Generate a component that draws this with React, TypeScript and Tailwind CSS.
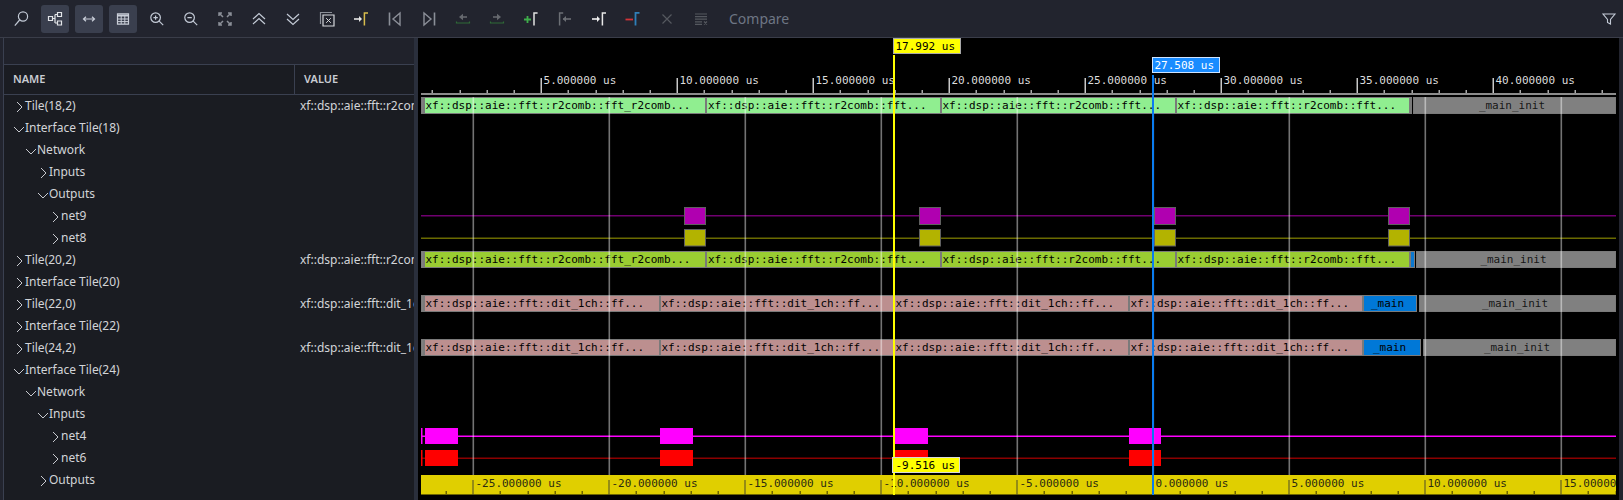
import type { ReactNode } from "react";

type TreeRow = { name: string; level: number; open?: boolean; value?: string };

const R2 = "xf::dsp::aie::fft::r2comb";
const DIT = "xf::dsp::aie::fft::dit_1ch";

const rows: TreeRow[] = [
  { name: "Tile(18,2)", level: 0, value: R2 },
  { name: "Interface Tile(18)", level: 0, open: true },
  { name: "Network", level: 1, open: true },
  { name: "Inputs", level: 2 },
  { name: "Outputs", level: 2, open: true },
  { name: "net9", level: 3 },
  { name: "net8", level: 3 },
  { name: "Tile(20,2)", level: 0, value: R2 },
  { name: "Interface Tile(20)", level: 0 },
  { name: "Tile(22,0)", level: 0, value: DIT },
  { name: "Interface Tile(22)", level: 0 },
  { name: "Tile(24,2)", level: 0, value: DIT },
  { name: "Interface Tile(24)", level: 0, open: true },
  { name: "Network", level: 1, open: true },
  { name: "Inputs", level: 2, open: true },
  { name: "net4", level: 3 },
  { name: "net6", level: 3 },
  { name: "Outputs", level: 2 },
];

function Ico({ children }: { children: ReactNode }) {
  return (
    <svg width="20" height="20" viewBox="0 0 20 20" fill="none" strokeWidth="1.2">
      {children}
    </svg>
  );
}

function Btn({ on, children }: { on?: boolean; children: ReactNode }) {
  return (
    <div className={`flex h-7 w-7 shrink-0 items-center justify-center rounded-[3px] ${on ? "bg-[#3a3f4e]" : ""}`}>
      {children}
    </div>
  );
}

const FG = "#c3cad6";
const GREY = "#8b8f98";
const DIM = "#55585f";

const icons: { on?: boolean; el: ReactNode }[] = [
  { el: <Ico><circle cx="12" cy="7.5" r="4.6" stroke={FG} /><path d="M8.6 11 3.8 16.6" stroke={FG} /></Ico> },
  { on: true, el: <Ico><path d="M3.5 7.5h4v4h-4zM12.5 3.5h4v4h-4zM12.5 12h4v4h-4zM7.5 9.5h2.5M10 5.5v8.5M10 5.5h2.5M10 14h2.5" stroke="#e2e4e8" /></Ico> },
  { on: true, el: <Ico><path d="M4.5 10h11M7 7.8 4.5 10 7 12.2M13 7.8l2.5 2.2-2.5 2.2" stroke="#c9ced8" /></Ico> },
  { on: true, el: <Ico><path d="M4.5 4.8h11v10.4h-11z" stroke="#c9ced8" /><path d="M4.5 5.5h11v2h-11z" fill="#c9ced8" /><path d="M4.5 10h11M4.5 12.6h11M8.2 7v8M11.8 7v8" stroke="#c9ced8" strokeWidth="1" /></Ico> },
  { el: <Ico><circle cx="8.6" cy="8.6" r="4.8" stroke={FG} /><path d="m12.2 12.2 4 4M6.4 8.6h4.4M8.6 6.4v4.4" stroke={FG} /></Ico> },
  { el: <Ico><circle cx="8.6" cy="8.6" r="4.8" stroke={FG} /><path d="m12.2 12.2 4 4M6.4 8.6h4.4" stroke={FG} /></Ico> },
  { el: <Ico><path d="M4 7V4h3M13 4h3v3M4 13v3h3M16 13v3h-3M4.5 4.5 8 8M15.5 4.5 12 8M4.5 15.5 8 12M15.5 15.5 12 12" stroke={GREY} strokeWidth="1.5" /></Ico> },
  { el: <Ico><path d="m4 10 6-5.5 6 5.5M4 15l6-5.5 6 5.5" stroke={FG} /></Ico> },
  { el: <Ico><path d="m4 5 6 5.5L16 5M4 10l6 5.5L16 10" stroke={FG} /></Ico> },
  { el: <Ico><path d="M3.5 15V3.5H15" stroke={GREY} /><path d="M6 6h11v11H6z" stroke="#d6d8dc" /><path d="m9.2 9.2 4.6 4.6m0-4.6-4.6 4.6" stroke="#d6d8dc" strokeWidth="1" /></Ico> },
  { el: <Ico><path d="M3 10h5" stroke="#e6e6e6" strokeWidth="1.6" /><path d="M8 7v6l3-3z" fill="#e6e6e6" /><path d="M13.4 16.5V3.9h3.6" stroke="#d8bd4d" strokeWidth="1.5" /></Ico> },
  { el: <Ico><path d="M4.5 3.5v13" stroke={GREY} strokeWidth="1.6" /><path d="M15 4v12L8 10z" stroke={GREY} strokeWidth="1.4" /></Ico> },
  { el: <Ico><path d="M15.5 3.5v13" stroke={GREY} strokeWidth="1.6" /><path d="M5 4v12l7-6z" stroke={GREY} strokeWidth="1.4" /></Ico> },
  { el: <Ico><path d="M8 8h6" stroke="#66696f" strokeWidth="1.6" /><path d="M10 4.8v6.4L6 8z" fill="#66696f" /><path d="M3.5 12.5v1.5h13v-1.5" stroke="#2f6b37" /></Ico> },
  { el: <Ico><path d="M6 8h6" stroke="#66696f" strokeWidth="1.6" /><path d="M10 4.8v6.4L14 8z" fill="#66696f" /><path d="M3.5 12.5v1.5h13v-1.5" stroke="#2f6b37" /></Ico> },
  { el: <Ico><path d="M3 10.5h7M6.5 7v7" stroke="#3fae4b" strokeWidth="1.8" /><path d="M13 16.5V3.9h3.6" stroke="#e2e2e2" strokeWidth="1.5" /></Ico> },
  { el: <Ico><path d="M8 10h8" stroke="#6c6f75" strokeWidth="1.6" /><path d="M11 7v6l-3.2-3z" fill="#6c6f75" /><path d="M4.6 16.5V3.9h3.6" stroke="#6c6f75" strokeWidth="1.5" /></Ico> },
  { el: <Ico><path d="M3 10h5" stroke="#f2f2f2" strokeWidth="1.6" /><path d="M8 7v6l3-3z" fill="#f2f2f2" /><path d="M13.4 16.5V3.9h3.6" stroke="#e8e8e8" strokeWidth="1.5" /></Ico> },
  { el: <Ico><path d="M2.5 10.5h7.5" stroke="#d13438" strokeWidth="1.8" /><path d="M12.5 16.5V3.9h4" stroke="#2f7fb8" strokeWidth="1.8" /></Ico> },
  { el: <Ico><path d="m5.5 5.5 9 9m0-9-9 9" stroke={DIM} /></Ico> },
  { el: <Ico><path d="M4 5h12M4 7.6h12M4 10.2h12M4 12.8h7M4 15.4h7" stroke={DIM} /><path d="m13 12.5 3 3m0-3-3 3" stroke={DIM} /></Ico> },
];

function Toolbar() {
  return (
    <div className="flex h-[38px] shrink-0 items-center gap-[6px] border-b border-[#3a3d49] bg-[#22242e] pl-[7px] pr-[6px]">
      {icons.map((ic, i) => (
        <Btn key={i} on={ic.on}>{ic.el}</Btn>
      ))}
      <span className="ml-[8px] text-[14px] text-[#6e7684]">Compare</span>
      <div className="ml-auto">
        <svg width="16" height="16" viewBox="0 0 16 16" fill="none" stroke={FG} strokeWidth="1.1">
          <path d="M2 3h12L9.5 8.5V13l-3-1.5v-3z" />
        </svg>
      </div>
    </div>
  );
}

function TreePanel() {
  return (
    <div className="flex w-[410px] shrink-0 flex-col bg-[#1a1c22] text-[#d2d4d8]">
      <div className="h-[27px] shrink-0 border-b border-[#3a4050] bg-[#20222b]" />
      <div className="flex h-[30px] shrink-0 items-center border-b border-[#3a4050] text-[11px] font-semibold text-[#c9ccd2]">
        <div className="flex h-full w-[291px] items-center border-r border-[#3a4050] pl-[9px]">NAME</div>
        <div className="pl-[9px]">VALUE</div>
      </div>
      <div className="flex-1 overflow-hidden">
        {rows.map((r, i) => (
          <div key={i} className="flex h-[22px] items-center text-[12px]">
            <div className="flex w-[291px] shrink-0 items-center" style={{ paddingLeft: 9 + r.level * 12 }}>
              <svg width="12" height="12" viewBox="0 0 12 12" fill="none" stroke="#c8cad0" strokeWidth="1" className="mt-[2px] shrink-0">
                {r.open ? <path d="m1 4 5 5 5-5" /> : <path d="m4 1 5 5-5 5" />}
              </svg>
              <span>{r.name}</span>
            </div>
            <div className="w-[119px] overflow-hidden whitespace-nowrap pl-[5px]">{r.value}</div>
          </div>
        ))}
      </div>
    </div>
  );
}

type Bar = { x: number; x2: number; fill: string; text: string; center?: boolean; tx?: number };

const r2Row = (fill: string, blueEnd: number, initStart: number): Bar[] => [
  { x: 421, x2: 424, fill: "#808080", text: "" },
  { x: 424, x2: 706, fill, text: "xf::dsp::aie::fft::r2comb::fft_r2comb...", tx: 425.5 },
  { x: 706, x2: 941, fill, text: "xf::dsp::aie::fft::r2comb::fft...", tx: 708 },
  { x: 941, x2: 1176, fill, text: "xf::dsp::aie::fft::r2comb::fft...", tx: 942.5 },
  { x: 1176, x2: 1410, fill, text: "xf::dsp::aie::fft::r2comb::fft...", tx: 1177.5 },
  { x: 1410, x2: blueEnd, fill: "#0b78d0", text: "" },
  { x: initStart, x2: 1616, fill: "#808080", text: "_main_init", center: true },
];

const ditRow = (mainEnd: number, initStart: number): Bar[] => [
  { x: 421, x2: 424, fill: "#808080", text: "" },
  { x: 424, x2: 660, fill: "#bc8f8f", text: "xf::dsp::aie::fft::dit_1ch::ff...", tx: 425.5 },
  { x: 660, x2: 894, fill: "#bc8f8f", text: "xf::dsp::aie::fft::dit_1ch::ff...", tx: 661.5 },
  { x: 894, x2: 1129, fill: "#bc8f8f", text: "xf::dsp::aie::fft::dit_1ch::ff...", tx: 895.5 },
  { x: 1129, x2: 1363, fill: "#bc8f8f", text: "xf::dsp::aie::fft::dit_1ch::ff...", tx: 1130.5 },
  { x: 1363, x2: mainEnd, fill: "#0078d7", text: "_main", center: true },
  { x: initStart, x2: 1616, fill: "#808080", text: "_main_init", center: true },
];

const barRows: { y: number; bars: Bar[] }[] = [
  { y: 97, bars: r2Row("#90ee90", 1412, 1413) },
  { y: 251, bars: r2Row("#9acd32", 1415, 1416) },
  { y: 295, bars: ditRow(1417, 1419) },
  { y: 339, bars: ditRow(1421, 1423) },
];

const netXs = [[684, 706], [919, 941], [1154, 1176], [1388, 1410]];
const pulseXs = [[425, 458], [660, 693], [895, 928], [1129, 1161]];

function WaveCanvas() {
  return (
    <svg
      width="1201"
      height="462"
      viewBox="418 38 1201 462"
      className="block shrink-0 bg-black font-['DejaVu_Sans_Mono',monospace]"
      fontSize="11"
    >
      <defs>
        <clipPath id="bottom-clip"><rect x="421" y="475" width="1195" height="20" /></clipPath>
      </defs>

      {/* signal rows */}
      {barRows.map((row) =>
        row.bars.map((b, i) => (
          <g key={`${row.y}-${i}`}>
            <rect x={b.x + 0.5} y={row.y + 0.5} width={Math.max(b.x2 - b.x - 1, 0.5)} height={16} fill={b.fill} stroke="#7a7a7a" />
            {b.text && (
              <text
                x={b.center ? (b.x + b.x2) / 2 - 2.5 : b.tx}
                y={row.y + 11.5}
                textAnchor={b.center ? "middle" : "start"}
                fill="#000"
                fillOpacity={b.fill === "#808080" ? 0.85 : 1}
              >
                {b.text}
              </text>
            )}
          </g>
        ))
      )}

      {/* nets with bordered pulses */}
      <rect x="421" y="215" width="1195" height="1.5" fill="#700070" />
      {netXs.map(([a, b]) => (
        <rect key={a} x={a + 0.5} y="207.5" width={b - a - 1} height="17" fill="#b000b0" stroke="#606060" />
      ))}
      <rect x="421" y="237.5" width="1195" height="1.5" fill="#6a6a00" />
      {netXs.map(([a, b]) => (
        <rect key={a} x={a + 0.5} y="229.5" width={b - a - 1} height="16.5" fill="#b3b300" stroke="#606060" />
      ))}

      <rect x="421" y="435.5" width="1195" height="1.5" fill="#ff00ff" />
      <rect x="421" y="428" width="1.5" height="16" fill="#ff00ff" />
      {pulseXs.map(([a, b]) => (
        <rect key={a} x={a} y="428" width={b - a} height="16" fill="#ff00ff" />
      ))}
      <rect x="421" y="457.5" width="1195" height="1.5" fill="#8b0000" />
      <rect x="421" y="450" width="1.5" height="16" fill="#ff0000" />
      {pulseXs.map(([a, b]) => (
        <rect key={a} x={a} y="450" width={b - a} height="16" fill="#ff0000" />
      ))}

      {/* grid */}
      {[473, 609, 745, 881, 1017, 1153, 1289, 1425, 1561].map((x) => (
        <rect key={x} x={x - 0.5} y="97" width="1.6" height="378" fill="#ffffff" fillOpacity="0.45" />
      ))}

      {/* top ruler */}
      <rect x="421" y="93" width="1195" height="2" fill="#8c8c8c" />
      {[5, 10, 15, 20, 25, 30, 35, 40].map((t, i) => {
        const x = 541 + i * 136;
        return (
          <g key={t}>
            <rect x={x - 0.5} y="78" width="1.5" height="15" fill="#c8c8c8" />
            <text x={x + 2.5} y="84" fill="#dcdcdc">{t}.000000 us</text>
          </g>
        );
      })}
      {[0, 1, 2, 3, 4, 5, 6, 7, 8].flatMap((k) =>
        [27, 55, 82, 109].map((o) => {
          const x = 405 + k * 136 + o;
          if (x < 421 || x > 1616) return null;
          return <rect key={x} x={x - 0.5} y="90" width="1.5" height="3" fill="#aaaaaa" />;
        })
      )}

      {/* bottom ruler */}
      <g clipPath="url(#bottom-clip)">
        <rect x="421" y="475" width="1195" height="20" fill="#e0cf00" />
        <rect x="421" y="494" width="1195" height="1" fill="#6e6600" />
        {["-25", "-20", "-15", "-10", "-5", "0", "5", "10", "15"].map((t, i) => {
          const x = 473 + i * 136;
          return (
            <g key={t}>
              <rect x={x - 0.5} y="480" width="1" height="15" fill="#4a4a2a" />
              <text x={x + 2.5} y="486.5" fill="#2a2a12">{t}.000000 us</text>
            </g>
          );
        })}
        {[-1, 0, 1, 2, 3, 4, 5, 6, 7, 8].flatMap((k) =>
          [27, 55, 82, 109].map((o) => {
            const x = 473 + k * 136 + o;
            return <rect key={x} x={x - 0.5} y="491" width="1.5" height="3" fill="#6e6600" />;
          })
        )}
      </g>

      {/* cursors */}
      <rect x="893" y="55" width="2" height="440" fill="#ffff00" />
      <rect x="1152" y="75" width="2" height="420" fill="#0a7cf0" />
      <rect x="893.5" y="38.5" width="67" height="15" fill="#ffff00" stroke="#a8a8a8" />
      <text x="895.5" y="49.5" fill="#000">17.992 us</text>
      <rect x="1152.5" y="57.5" width="67" height="15" fill="#1a8cff" stroke="#cfe4ff" />
      <text x="1154.5" y="68.5" fill="#fff">27.508 us</text>
      <rect x="892.5" y="457.5" width="67" height="15" fill="#ffff00" stroke="#d8d8d8" />
      <text x="895.5" y="469" fill="#000">-9.516 us</text>
    </svg>
  );
}

export default function App() {
  return (
    <div className="flex h-[500px] w-[1623px] flex-col overflow-hidden bg-[#22242e] font-['Noto_Sans',sans-serif]">
      <Toolbar />
      <div className="flex min-h-0 flex-1">
        <div className="w-[4px] shrink-0 border-r border-[#3a4050]" />
        <TreePanel />
        <div className="w-[4px] shrink-0 bg-[#2a2f3c]" />
        <WaveCanvas />
      </div>
    </div>
  );
}
